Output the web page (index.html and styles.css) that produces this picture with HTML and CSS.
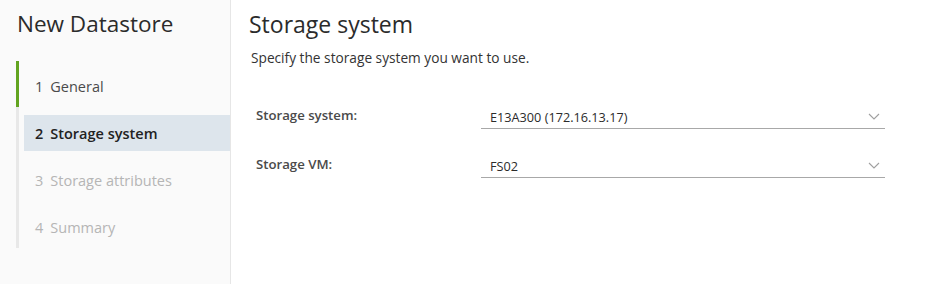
FILE: index.html
```html
<!DOCTYPE html>
<html lang="en">
<head>
    <meta charset="UTF-8">
    <title>New Datastore</title>
    <link rel="stylesheet" href="styles.css">
</head>
<body>
    <div class="wizard">
        <div class="sidebar">
            <h1 class="wizard-title">New Datastore</h1>
            <ul class="steps">
                <li class="step done"><span class="num">1</span>General</li>
                <li class="step active"><span class="num">2</span>Storage system</li>
                <li class="step"><span class="num">3</span>Storage attributes</li>
                <li class="step"><span class="num">4</span>Summary</li>
            </ul>
        </div>

        <div class="content">
            <h2 class="page-title">Storage system</h2>
            <p class="intro">Specify the storage system you want to use.</p>

            <div class="form-row">
                <label class="field-label">Storage system:</label>
                <div class="select">
                    <span class="select-value">E13A300 (172.16.13.17)</span>
                    <svg class="chevron" width="12" height="7" viewBox="0 0 12 7"><path d="M1 1 L6 6 L11 1" fill="none" stroke="#a0a0a0" stroke-width="1.1"/></svg>
                </div>
            </div>

            <div class="form-row">
                <label class="field-label">Storage VM:</label>
                <div class="select">
                    <span class="select-value">FS02</span>
                    <svg class="chevron" width="12" height="7" viewBox="0 0 12 7"><path d="M1 1 L6 6 L11 1" fill="none" stroke="#a0a0a0" stroke-width="1.1"/></svg>
                </div>
            </div>
        </div>
    </div>
</body>
</html>
```

FILE: styles.css
```css
body {
    margin: 0;
    font-family: 'Open Sans', 'Noto Sans', sans-serif;
    color: #313131;
    background: white;
}

.wizard {
    display: flex;
    height: 284px;
}

.sidebar {
    width: 231px;
    background: #fafafa;
    border-right: 1px solid #e6e6e6;
    padding: 10px 0 0 16px;
    box-sizing: border-box;
    flex-shrink: 0;
}

.wizard-title {
    margin: 0 0 0 1px;
    font-size: 22.5px;
    font-weight: 400;
    line-height: 28px;
    color: #2b2b2b;
}

.steps {
    list-style: none;
    margin: 23px 0 0 0;
    padding: 7px 0 3px 0;
    border-left: 3px solid #e8e8e8;
}

.step {
    height: 36px;
    margin-bottom: 11px;
    margin-left: 5px;
    padding-left: 11px;
    display: flex;
    align-items: center;
    font-size: 14.5px;
    color: #b5b5b5;
}

.step:last-child {
    margin-bottom: 0;
}

.step.done {
    color: #4a4a4a;
    position: relative;
}

.step.done::before {
    content: '';
    position: absolute;
    left: -8px;
    top: -7px;
    width: 3px;
    height: 46px;
    background: #62a420;
}

.step.active {
    background: #dde5ec;
    color: #222;
    font-weight: 600;
}

.num {
    margin-right: 7px;
}

.content {
    flex: 1;
    padding: 10px 0 0 18px;
}

.page-title {
    margin: 0;
    font-size: 23px;
    font-weight: 400;
    line-height: 28px;
    color: #2b2b2b;
}

.intro {
    margin: 12px 0 0 2px;
    font-size: 13.7px;
    line-height: 16px;
    color: #333;
}

.form-row {
    display: flex;
    align-items: flex-end;
    margin-top: 40px;
    margin-left: 7px;
    width: 629px;
}

.form-row + .form-row {
    margin-top: 26px;
}

.field-label {
    width: 225px;
    font-size: 13.2px;
    font-weight: 600;
    color: #4a4a4a;
    padding-bottom: 5px;
}

.select {
    flex: 1;
    display: flex;
    align-items: center;
    justify-content: space-between;
    border-bottom: 1px solid #a8a8a8;
    height: 22px;
    padding-left: 9px;
    font-size: 12.7px;
    color: #2b2b2b;
}

.chevron {
    margin-right: 5px;
    margin-bottom: 2px;
}
```
